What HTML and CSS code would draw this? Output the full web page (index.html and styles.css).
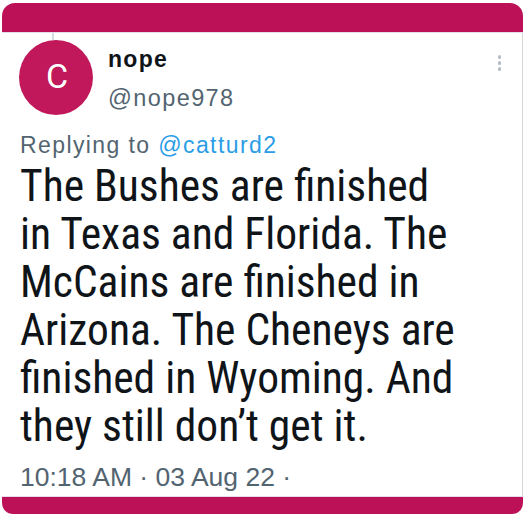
FILE: index.html
```html
<!DOCTYPE html>
<html>
<head>
<meta charset="utf-8">
<link rel="stylesheet" href="styles.css">
</head>
<body>
<div class="frame">
  <div class="topbar"></div>
  <div class="card">
    <div class="connector"></div>
    <div class="header">
      <div class="avatar">C</div>
      <div class="names">
        <div class="name">nope</div>
        <div class="handle">@nope978</div>
      </div>
      <div class="more"><span></span><span></span><span></span></div>
    </div>
    <div class="reply">Replying to <span class="link">@catturd2</span></div>
    <div class="text">The Bushes are finished<br>in Texas and Florida. The<br>McCains are finished in<br>Arizona. The Cheneys are<br>finished in Wyoming. And<br>they still don’t get it.</div>
    <div class="meta">10:18 AM · 03 Aug 22 ·</div>
  </div>
  <div class="bottombar"></div>
</div>
</body>
</html>
```
FILE: styles.css
```css
html, body {
  margin: 0;
  padding: 0;
  background: #fff;
  overflow: hidden;
}
.frame {
  margin: 3px 0 0 2px;
  width: 521px;
  font-family: "Liberation Sans", Arial, sans-serif;
}
.topbar {
  height: 29px;
  background: #bd1157;
  border-radius: 13px 13px 0 0;
  border-bottom: 1px solid #e6dcf0;
}
.card {
  position: relative;
  height: 463px;
  border-right: 1px solid #d6d6d6;
  box-sizing: border-box;
  padding: 7px 0 0 17px;
}
.connector {
  position: absolute;
  left: 50px;
  top: 0;
  width: 2px;
  height: 7px;
  background: #d5dde4;
}
.header {
  display: flex;
  align-items: flex-start;
  height: 74px;
}
.avatar {
  width: 74px;
  height: 75px;
  border-radius: 50%;
  background: #c0185a;
  color: #fff;
  font-family: Roboto, "Liberation Sans", sans-serif;
  font-size: 34px;
  display: flex;
  align-items: center;
  justify-content: center;
  box-sizing: border-box;
  padding: 0 0 4px 2px;
}
.names {
  margin-left: 15px;
  padding-top: 5px;
  flex: 1;
}
.name {
  font-weight: bold;
  font-size: 23px;
  letter-spacing: 1.3px;
  color: #0f1419;
  line-height: 28px;
}
.handle {
  font-size: 23.5px;
  letter-spacing: 1.4px;
  color: #536471;
  line-height: 30px;
  margin-top: 10px;
}
.more {
  display: flex;
  flex-direction: column;
  gap: 2.7px;
  margin: 15px 21px 0 0;
}
.more span {
  width: 3.5px;
  height: 3.5px;
  border-radius: 50%;
  background: #b3bcc4;
}
.reply {
  font-size: 23px;
  letter-spacing: 1.4px;
  color: #536471;
  margin-top: 16px;
  line-height: 30px;
  padding-left: 1px;
}
.link {
  color: #2a9de6;
}
.text {
  font-family: "Roboto Condensed", Roboto, sans-serif;
  font-weight: 450;
  font-size: 43.5px;
  line-height: 48px;
  color: #0f1419;
  margin-top: 3px;
  padding-left: 1px;
}
.meta {
  font-size: 26.5px;
  color: #536471;
  line-height: 32px;
  margin-top: 10px;
  padding-left: 1px;
}
.bottombar {
  height: 17px;
  background: #bd1157;
  border-radius: 0 0 11px 11px;
  border-top: 1px solid #e6dcf0;
}
```
